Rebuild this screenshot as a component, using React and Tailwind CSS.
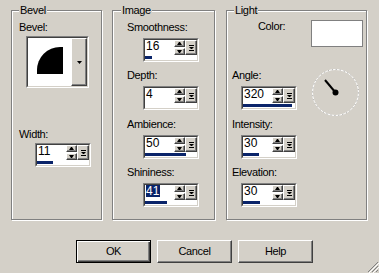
import React from "react";

const raisedBtn =
  "bg-[#d4d0c8] border border-t-white border-l-white border-r-[#404040] border-b-[#404040] shadow-[inset_-1px_-1px_0_#808080]";

function Arrow({ up }) {
  return (
    <svg width="5" height="3" viewBox="0 0 5 3">
      {up ? (
        <path d="M2 0 L3 0 L5 3 L0 3 Z" fill="#000" />
      ) : (
        <path d="M0 0 L5 0 L3 3 L2 3 Z" fill="#000" />
      )}
    </svg>
  );
}

function Spin({ value, fill = 0, selected = false }) {
  return (
    <div className="w-[56px] h-[24px] border border-t-[#808080] border-l-[#808080] border-r-white border-b-white">
      <div className="h-full border border-t-[#404040] border-l-[#404040] border-r-[#d4d0c8] border-b-[#d4d0c8] bg-white flex flex-col">
        <div className="flex h-[16px]">
          <div className="flex-1 pl-[1px] pt-0 text-[12px] leading-[12px] tracking-normal">
            {selected ? (
              <span className="inline-block h-[12px] bg-[#0a246a] pr-[1px] text-white">{value}</span>
            ) : (
              value
            )}
          </div>
          <div className="flex w-[11px] h-[15px] flex-col gap-[1px]">
            <div className={`flex h-[7px] items-center justify-center ${raisedBtn}`}>
              <Arrow up />
            </div>
            <div className={`flex h-[7px] items-center justify-center ${raisedBtn}`}>
              <Arrow />
            </div>
          </div>
          <div className={`flex w-[12px] h-[15px] items-center justify-center ${raisedBtn}`}>
            <svg width="5" height="6" viewBox="0 0 5 6">
              <rect x="0" y="0" width="5" height="1" fill="#000" />
              <path d="M0 2 L5 2 L3 4 L2 4 Z" fill="#000" />
              <rect x="0" y="5" width="5" height="1" fill="#000" />
            </svg>
          </div>
        </div>
        <div className="h-[4px]">
          <div className="h-[3px] bg-[#0a246a]" style={{ width: fill }} />
        </div>
      </div>
    </div>
  );
}

function Group({ title, className, legendLeft, children }) {
  return (
    <div
      className={`relative h-[210px] border border-[#808080] shadow-[1px_1px_0_#fff,inset_1px_1px_0_#fff] ${className}`}
    >
      <span className={`absolute -top-[8px] ${legendLeft} bg-[#d4d0c8] px-[1px] leading-[14px]`}>
        {title}
      </span>
      {children}
    </div>
  );
}

function Label({ children, className = "" }) {
  return <div className={`h-[14px] leading-[14px] ${className}`}>{children}</div>;
}

function Button({ children, isDefault }) {
  const cls = isDefault
    ? "border border-black shadow-[inset_1px_1px_0_#fff,inset_-1px_-1px_0_#404040,inset_-2px_-2px_0_#808080]"
    : "border border-t-white border-l-white border-r-[#404040] border-b-[#404040] shadow-[inset_-1px_-1px_0_#808080]";
  return (
    <button
      type="button"
      className={`flex h-[23px] w-[75px] items-center justify-center bg-[#d4d0c8] ${cls}`}
    >
      {children}
    </button>
  );
}

export default function App() {
  return (
    <div className="relative h-[273px] w-[379px] overflow-hidden bg-[#d4d0c8] font-['Liberation_Sans',Arial,sans-serif] text-[11px] tracking-[-0.35px] text-black">
      <div className="flex pl-[11px] pt-[10px]">
        {/* Bevel */}
        <Group title="Bevel" className="w-[91px]" legendLeft="left-[7px]">
          <div className="pl-[7px] pt-[9px]">
            <Label>Bevel:</Label>
            <div className="ml-[7px] mt-[2px] h-[52px] w-[63px] border border-t-[#808080] border-l-[#808080] border-r-white border-b-white">
              <div className="flex h-full border border-t-[#404040] border-l-[#404040] border-r-[#d4d0c8] border-b-[#d4d0c8] bg-white">
                <div className="flex flex-1 items-center justify-center pb-[3px] pl-[1px]">
                  <div className="h-[27px] w-[26px] rounded-tl-[23px] bg-black" />
                </div>
                <div className={`flex w-[16px] items-center justify-center ${raisedBtn}`}>
                  <svg width="5" height="3" viewBox="0 0 5 3">
                    <path d="M0 0 L5 0 L2.5 3 Z" fill="#000" />
                  </svg>
                </div>
              </div>
            </div>
            <Label className="mt-[39px]">Width:</Label>
            <div className="ml-[16px] mt-[2px]">
              <Spin value="11" fill={16} />
            </div>
          </div>
        </Group>

        {/* Image */}
        <Group title="Image" className="ml-[10px] w-[103px]" legendLeft="left-[8px]">
          <div className="pl-[14px] pt-[9px]">
            <Label>Smoothness:</Label>
            <div className="ml-[16px] mt-[4px]">
              <Spin value="16" fill={7} />
            </div>
            <Label className="mt-[6px]">Depth:</Label>
            <div className="ml-[16px] mt-[4px]">
              <Spin value="4" fill={0} />
            </div>
            <Label className="mt-[7px]">Ambience:</Label>
            <div className="ml-[16px] mt-[4px]">
              <Spin value="50" fill={41} />
            </div>
            <Label className="mt-[6px]">Shininess:</Label>
            <div className="ml-[16px] mt-[4px]">
              <Spin value="41" fill={22} selected />
            </div>
          </div>
        </Group>

        {/* Light */}
        <Group title="Light" className="ml-[11px] w-[141px]" legendLeft="left-[7px]">
          <div className="pt-[9px]">
            <div className="flex items-start pl-[31px]">
              <Label className="-mt-[1px] w-[53px]">Color:</Label>
              <div className="h-[27px] w-[52px] border border-[#808080] bg-white" />
            </div>
            <div className="mt-[21px] flex items-start pl-[5px]">
              <div>
                <Label>Angle:</Label>
                <div className="ml-[9px] mt-[4px]">
                  <Spin value="320" fill={49} />
                </div>
              </div>
              <svg className="ml-[14px] mt-[1px]" width="50" height="48" viewBox="0 0 50 48">
                <circle cx="24.5" cy="23.5" r="23" fill="none" stroke="#ffffff" strokeWidth="1" />
                <circle
                  cx="24.5"
                  cy="23.5"
                  r="23"
                  fill="none"
                  stroke="#9a9a9a"
                  strokeWidth="1"
                  strokeDasharray="1 3"
                />
                <line x1="14" y1="11" x2="24.5" y2="23.5" stroke="#000" strokeWidth="2" />
                <circle cx="24.5" cy="23.5" r="3" fill="#000" />
              </svg>
            </div>
            <div className="pl-[5px]">
              <Label>Intensity:</Label>
              <div className="ml-[9px] mt-[4px]">
                <Spin value="30" fill={16} />
              </div>
              <Label className="mt-[6px]">Elevation:</Label>
              <div className="ml-[9px] mt-[4px]">
                <Spin value="30" fill={17} />
              </div>
            </div>
          </div>
        </Group>
      </div>

      <div className="mt-[20px] flex gap-[6px] pl-[76px]">
        <Button isDefault>OK</Button>
        <Button>Cancel</Button>
        <Button>Help</Button>
      </div>

      <svg className="absolute bottom-0 right-0" width="12" height="12" viewBox="0 0 12 12">
        <line x1="11" y1="1" x2="1" y2="11" stroke="#808080" />
        <line x1="12" y1="2" x2="2" y2="12" stroke="#ffffff" />
        <line x1="11" y1="5" x2="5" y2="11" stroke="#808080" />
        <line x1="12" y1="6" x2="6" y2="12" stroke="#ffffff" />
        <line x1="11" y1="9" x2="9" y2="11" stroke="#808080" />
      </svg>
    </div>
  );
}
